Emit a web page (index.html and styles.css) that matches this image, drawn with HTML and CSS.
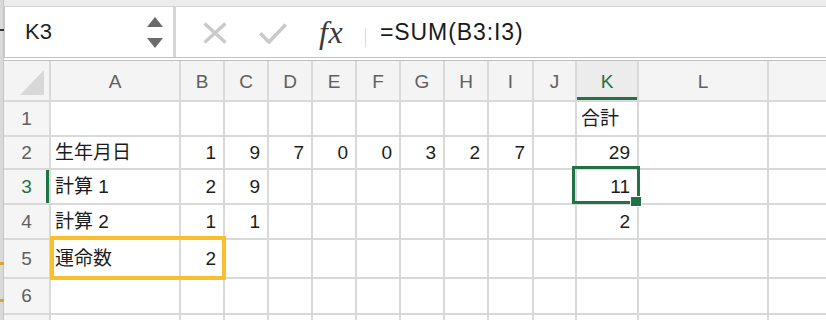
FILE: index.html
```html
<!DOCTYPE html>
<html lang="ja">
<head>
    <meta charset="UTF-8">
    <title>運命数</title>
    <link rel="stylesheet" href="styles.css">
</head>
<body>
<div class="app">
    <!-- window edge behind the sheet -->
    <div class="edge">
        <span class="mark dark" style="top: 29px"></span>
        <span class="mark gold" style="top: 262px"></span>
        <span class="mark gold" style="top: 299px"></span>
    </div>

    <div class="main">
        <div class="topstrip"></div>

        <!-- name box + formula bar -->
        <div class="bar">
            <div class="namebox">
                <span>K3</span>
                <svg class="spin" width="16" height="32" viewBox="0 0 16 32">
                    <path d="M8 0 L16 10 L0 10 Z" fill="#6b6b6b"/>
                    <path d="M0 21 L16 21 L8 31 Z" fill="#6b6b6b"/>
                </svg>
            </div>
            <div class="divider"></div>
            <div class="formula">
                <svg class="icon-x" width="24" height="22" viewBox="0 0 24 22">
                    <path d="M1.5 1.5 L22.5 20.5 M22.5 1.5 L1.5 20.5" stroke="#cacaca" stroke-width="3.4" fill="none"/>
                </svg>
                <svg class="icon-ok" width="28" height="21" viewBox="0 0 28 21">
                    <path d="M1.2 10.2 L10 19 L26.8 1.5" stroke="#cacaca" stroke-width="3.6" fill="none"/>
                </svg>
                <span class="fx">fx</span>
                <span class="fsep"></span>
                <span class="ftext">=SUM(B3:I3)</span>
            </div>
        </div>

        <!-- sheet -->
        <div class="grid">
            <div class="hd corner">
                <svg width="45" height="39" viewBox="0 0 45 39"><path d="M16 34 L40 34 L40 9 Z" fill="#d8d8d8"/></svg>
            </div>
            <div class="hd">A</div><div class="hd">B</div><div class="hd">C</div><div class="hd">D</div>
            <div class="hd">E</div><div class="hd">F</div><div class="hd">G</div><div class="hd">H</div>
            <div class="hd">I</div><div class="hd">J</div><div class="hd on">K</div><div class="hd">L</div>
            <div class="hd"></div>

            <!-- row 1 -->
            <div class="rh">1</div>
            <div class="c"></div><div class="c"></div><div class="c"></div><div class="c"></div>
            <div class="c"></div><div class="c"></div><div class="c"></div><div class="c"></div>
            <div class="c"></div><div class="c"></div><div class="c">合計</div><div class="c"></div>
            <div class="c"></div>

            <!-- row 2 -->
            <div class="rh">2</div>
            <div class="c">生年月日</div><div class="c n">1</div><div class="c n">9</div><div class="c n">7</div>
            <div class="c n">0</div><div class="c n">0</div><div class="c n">3</div><div class="c n">2</div>
            <div class="c n">7</div><div class="c"></div><div class="c n">29</div><div class="c"></div>
            <div class="c"></div>

            <!-- row 3 -->
            <div class="rh on">3</div>
            <div class="c">計算 1</div><div class="c n">2</div><div class="c n">9</div><div class="c"></div>
            <div class="c"></div><div class="c"></div><div class="c"></div><div class="c"></div>
            <div class="c"></div><div class="c"></div>
            <div class="c n active">11<span class="selbox"></span><span class="handle"></span></div>
            <div class="c"></div>
            <div class="c"></div>

            <!-- row 4 -->
            <div class="rh">4</div>
            <div class="c">計算 2</div><div class="c n">1</div><div class="c n">1</div><div class="c"></div>
            <div class="c"></div><div class="c"></div><div class="c"></div><div class="c"></div>
            <div class="c"></div><div class="c"></div><div class="c n">2</div><div class="c"></div>
            <div class="c"></div>

            <!-- row 5 -->
            <div class="rh">5</div>
            <div class="c marked">運命数<span class="markbox"></span></div><div class="c n">2</div><div class="c"></div><div class="c"></div>
            <div class="c"></div><div class="c"></div><div class="c"></div><div class="c"></div>
            <div class="c"></div><div class="c"></div><div class="c"></div><div class="c"></div>
            <div class="c"></div>

            <!-- row 6 -->
            <div class="rh">6</div>
            <div class="c"></div><div class="c"></div><div class="c"></div><div class="c"></div>
            <div class="c"></div><div class="c"></div><div class="c"></div><div class="c"></div>
            <div class="c"></div><div class="c"></div><div class="c"></div><div class="c"></div>
            <div class="c"></div>

            <!-- row 7 -->
            <div class="rh"></div>
            <div class="c"></div><div class="c"></div><div class="c"></div><div class="c"></div>
            <div class="c"></div><div class="c"></div><div class="c"></div><div class="c"></div>
            <div class="c"></div><div class="c"></div><div class="c"></div><div class="c"></div>
            <div class="c"></div>
        </div>
    </div>
</div>
</body>
</html>
```

FILE: styles.css
```css
/* Reset */
body {
    margin: 0;
    background: #fff;
    font-family: "Liberation Sans", "Noto Sans CJK JP", sans-serif;
    color: #1c1c1c;
    overflow: hidden;
}

.app {
    display: flex;
    height: 100vh;
}

/* Left window edge */
.edge {
    width: 3px;
    background: #d9d9d9;
    border-right: 1px solid #c4c4c4;
    position: relative;
}

.edge .mark {
    position: absolute;
    left: 0;
    width: 4px;
    height: 3px;
}

.edge .mark.dark { background: #333; height: 2px; }
.edge .mark.gold { background: #d9a530; }

.main {
    flex: 1;
    min-width: 0;
    display: flex;
    flex-direction: column;
}

.topstrip {
    height: 6px;
    background: #ececec;
    border-bottom: 1px solid #d3d3d3;
}

/* Name box and formula bar */
.bar {
    height: 50px;
    display: flex;
    border-bottom: 4px double #c2c2c2;
}

.namebox {
    box-sizing: border-box;
    width: 169px;
    border-left: 1px solid #c9c9c9;
    padding: 0 10px 0 20px;
    display: flex;
    align-items: center;
    justify-content: space-between;
    font-size: 22px;
    color: #1f1f1f;
}

.namebox .spin {
    margin-top: 2px;
}

.divider {
    width: 3px;
    background: #d5d5d5;
}

.formula {
    flex: 1;
    display: flex;
    align-items: center;
}

.icon-x { margin-left: 27px; margin-top: 2px; }
.icon-ok { margin-left: 32px; margin-top: 2px; }

.fx {
    display: inline-block;
    width: 28px;
    margin-left: 32px;
    font-family: "Liberation Serif", serif;
    font-style: italic;
    font-size: 32px;
    letter-spacing: 0.5px;
    color: #3a3a3a;
}

.fsep {
    align-self: flex-end;
    width: 1px;
    height: 19px;
    margin: 0 0 10px 18px;
    background: #dcdcdc;
}

.ftext {
    margin-left: 14px;
    font-size: 23px;
    letter-spacing: 0.9px;
    color: #1a1a1a;
}

/* Sheet grid */
.grid {
    flex: 1;
    display: grid;
    grid-template-columns: 45px 128px repeat(7, 42px) 43px 41px 60px 128px 1fr;
    grid-template-rows: 39px 33px 31px 33px 33px 37px 34px 1fr;
    gap: 2px;
    background: #d9d9d9;
}

.hd {
    background: #f4f4f4;
    display: flex;
    align-items: center;
    justify-content: center;
    padding-top: 2px;
    font-size: 19px;
    color: #606060;
}

.hd.corner {
    padding: 0;
    align-items: stretch;
}

.hd.on {
    background: #ececec;
    color: #217346;
    box-shadow: inset 0 -3px #217346;
}

.rh {
    background: #f5f5f5;
    display: flex;
    align-items: center;
    justify-content: center;
    font-size: 19px;
    color: #606060;
}

.rh.on {
    color: #217346;
    box-shadow: inset -3px 0 #217346;
}

.c {
    background: #fff;
    display: flex;
    align-items: center;
    padding: 0 4px;
    font-size: 19px;
    line-height: 1;
    white-space: nowrap;
}

.c.n {
    justify-content: flex-end;
    padding-right: 7px;
}

/* Active cell K3 */
.c.active {
    position: relative;
}

.selbox {
    position: absolute;
    left: -5px;
    top: -4px;
    width: 68px;
    height: 38px;
    box-sizing: border-box;
    border: 3.5px solid #217346;
}

.handle {
    position: absolute;
    left: 53px;
    top: 26px;
    width: 10px;
    height: 9px;
    background: #217346;
    border: 1.5px solid #fff;
}

/* Highlighted result A5:B5 */
.c.marked {
    position: relative;
}

.markbox {
    position: absolute;
    left: -1px;
    top: -4px;
    width: 176px;
    height: 44px;
    box-sizing: border-box;
    border: 4px solid #f9bf2c;
}
```
